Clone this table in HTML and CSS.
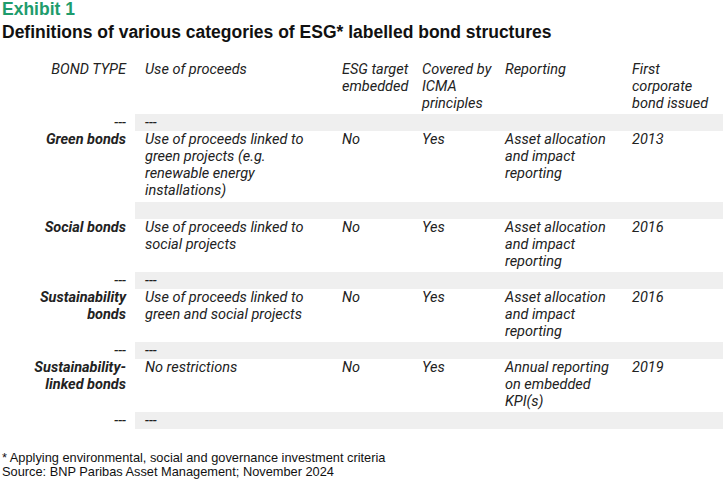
FILE: index.html
```html
<!DOCTYPE html>
<html lang="en">
<head>
<meta charset="utf-8">
<title>Exhibit 1</title>
<link rel="stylesheet" href="styles.css">
</head>
<body>
<header class="titles">
  <div class="exhibit">Exhibit 1</div>
  <h1 class="heading">Definitions of various categories of ESG* labelled bond structures</h1>
</header>
<table class="grid">
  <colgroup>
    <col class="c1"><col class="c2"><col class="c3"><col class="c4"><col class="c5"><col class="c6">
  </colgroup>
  <thead>
    <tr class="row3">
      <th class="type">BOND TYPE</th>
      <th>Use of proceeds</th>
      <th>ESG target embedded</th>
      <th>Covered by ICMA principles</th>
      <th>Reporting</th>
      <th class="last">First corporate bond issued</th>
    </tr>
  </thead>
  <tbody>
    <tr class="band">
      <td class="type plain">---</td><td>---</td><td></td><td></td><td></td><td></td>
    </tr>
    <tr class="row4">
      <td class="type">Green bonds</td>
      <td>Use of proceeds linked to green projects (e.g. renewable energy installations)</td>
      <td>No</td><td>Yes</td><td>Asset allocation and impact reporting</td><td class="last">2013</td>
    </tr>
    <tr class="band">
      <td class="type plain"></td><td>&nbsp;</td><td></td><td></td><td></td><td></td>
    </tr>
    <tr class="row3">
      <td class="type">Social bonds</td>
      <td>Use of proceeds linked to social projects</td>
      <td>No</td><td>Yes</td><td>Asset allocation and impact reporting</td><td class="last">2016</td>
    </tr>
    <tr class="band">
      <td class="type plain">---</td><td>---</td><td></td><td></td><td></td><td></td>
    </tr>
    <tr class="row3">
      <td class="type">Sustainability bonds</td>
      <td>Use of proceeds linked to green and social projects</td>
      <td>No</td><td>Yes</td><td>Asset allocation and impact reporting</td><td class="last">2016</td>
    </tr>
    <tr class="band">
      <td class="type plain">---</td><td>---</td><td></td><td></td><td></td><td></td>
    </tr>
    <tr class="row3">
      <td class="type">Sustainability-<br>linked bonds</td>
      <td>No restrictions</td>
      <td>No</td><td>Yes</td><td>Annual reporting on embedded KPI(s)</td><td class="last">2019</td>
    </tr>
    <tr class="band">
      <td class="type plain">---</td><td>---</td><td></td><td></td><td></td><td></td>
    </tr>
  </tbody>
</table>
<footer class="notes">
  <p>* Applying environmental, social and governance investment criteria</p>
  <p>Source: BNP Paribas Asset Management; November 2024</p>
</footer>
</body>
</html>
```
FILE: styles.css
```css
html, body {
  margin: 0;
  padding: 0;
  background: #ffffff;
}
body {
  width: 725px;
  height: 484px;
  overflow: hidden;
  font-family: "Liberation Sans", Arial, sans-serif;
  color: #111;
}
.titles {
  padding: 0 0 0 2px;
}
.exhibit {
  font-weight: bold;
  font-size: 17.5px;
  line-height: 18px;
  color: #1e9c6c;
}
.heading {
  margin: 4px 0 0;
  font-size: 17.5px;
  line-height: 20px;
  font-weight: bold;
  color: #111;
}
.grid {
  margin-top: 19px;
  width: 723px;
  table-layout: fixed;
  border-collapse: collapse;
  border-spacing: 0;
  font-family: Roboto, "Open Sans", sans-serif;
  font-style: italic;
  font-size: 14.5px;
  line-height: 17px;
  color: #222;
}
.c1 { width: 135px; }
.c2 { width: 197px; }
.c3 { width: 80px; }
.c4 { width: 83px; }
.c5 { width: 127px; }
.c6 { width: 101px; }
.grid th, .grid td {
  font-weight: normal;
  text-align: left;
  vertical-align: top;
  padding: 0 2px 0 10px;
  white-space: normal;
}
.grid td:nth-child(2), .grid th:nth-child(2) {
  padding-right: 16px;
}
.grid .last {
  padding-right: 10px;
}
.grid .type {
  text-align: right;
  padding: 0 9px 0 0;
  font-weight: bold;
}
.grid th.type, .grid .type.plain {
  font-weight: normal;
}
.grid tr.row3 { height: 53px; }
.grid tr.row4 { height: 71px; }
.grid tr.band { height: 17px; }
.band td {
  background: #efefef;
  vertical-align: middle;
}
.band td.type {
  background: #ffffff;
}
.notes {
  margin-top: 22px;
  padding-left: 2px;
  font-size: 12.8px;
  line-height: 14px;
  color: #111;
}
.notes p {
  margin: 0;
}
```
